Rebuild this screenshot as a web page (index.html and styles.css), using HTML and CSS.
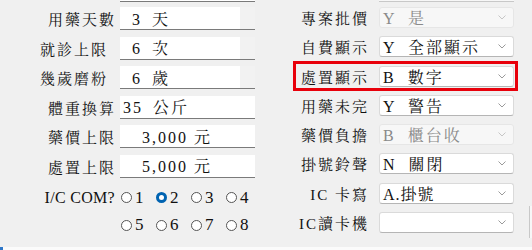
FILE: index.html
```html
<!DOCTYPE html>
<html lang="zh-Hant">
<head>
<meta charset="utf-8">
<link rel="stylesheet" href="styles.css">
</head>
<body>
<div class="panel">
  <div class="col left">
    <div class="stub-input"></div>
    <div class="row">
      <div class="label">用藥天數</div>
      <div class="input"><span class="val p12">3 天</span><span class="spin"></span></div>
    </div>
    <div class="row">
      <div class="label narrow">就診上限</div>
      <div class="input"><span class="val p12">6 次</span><span class="spin"></span></div>
    </div>
    <div class="row">
      <div class="label narrow">幾歲磨粉</div>
      <div class="input"><span class="val p12">6 歲</span><span class="spin"></span></div>
    </div>
    <div class="row">
      <div class="label">體重換算</div>
      <div class="input"><span class="val p3">35 公斤</span></div>
    </div>
    <div class="row">
      <div class="label">藥價上限</div>
      <div class="input"><span class="val p22 money">3,000 元</span></div>
    </div>
    <div class="row">
      <div class="label">處置上限</div>
      <div class="input"><span class="val p22 money">5,000 元</span></div>
    </div>
    <div class="row radio-row">
      <div class="label latin">I/C COM?</div>
      <div class="radios">
        <span class="radio"><span class="dot"></span>1</span>
        <span class="radio"><span class="dot on"></span>2</span>
        <span class="radio"><span class="dot"></span>3</span>
        <span class="radio"><span class="dot"></span>4</span>
      </div>
    </div>
    <div class="row radio-row">
      <div class="label"></div>
      <div class="radios">
        <span class="radio"><span class="dot"></span>5</span>
        <span class="radio"><span class="dot"></span>6</span>
        <span class="radio"><span class="dot"></span>7</span>
        <span class="radio"><span class="dot"></span>8</span>
      </div>
    </div>
  </div>
  <div class="col right">
    <div class="stub-select"></div>
    <div class="srow">
      <div class="slabel">專案批價</div>
      <div class="select disabled"><span class="sval">Y 是</span><svg class="chev" width="8" height="5" viewBox="0 0 8 5"><path d="M0.5 0.5 L4 4 L7.5 0.5" fill="none" stroke="currentColor" stroke-width="1"/></svg></div>
    </div>
    <div class="srow">
      <div class="slabel">自費顯示</div>
      <div class="select"><span class="sval">Y 全部顯示</span><svg class="chev" width="8" height="5" viewBox="0 0 8 5"><path d="M0.5 0.5 L4 4 L7.5 0.5" fill="none" stroke="currentColor" stroke-width="1"/></svg></div>
    </div>
    <div class="srow marked">
      <div class="slabel">處置顯示</div>
      <div class="select"><span class="sval">B 數字</span><svg class="chev" width="8" height="5" viewBox="0 0 8 5"><path d="M0.5 0.5 L4 4 L7.5 0.5" fill="none" stroke="currentColor" stroke-width="1"/></svg></div>
    </div>
    <div class="srow">
      <div class="slabel">用藥未完</div>
      <div class="select"><span class="sval">Y 警告</span><svg class="chev" width="8" height="5" viewBox="0 0 8 5"><path d="M0.5 0.5 L4 4 L7.5 0.5" fill="none" stroke="currentColor" stroke-width="1"/></svg></div>
    </div>
    <div class="srow">
      <div class="slabel">藥價負擔</div>
      <div class="select disabled"><span class="sval">B 櫃台收</span><svg class="chev" width="8" height="5" viewBox="0 0 8 5"><path d="M0.5 0.5 L4 4 L7.5 0.5" fill="none" stroke="currentColor" stroke-width="1"/></svg></div>
    </div>
    <div class="srow">
      <div class="slabel">掛號鈴聲</div>
      <div class="select"><span class="sval">N 關閉</span><svg class="chev" width="8" height="5" viewBox="0 0 8 5"><path d="M0.5 0.5 L4 4 L7.5 0.5" fill="none" stroke="currentColor" stroke-width="1"/></svg></div>
    </div>
    <div class="srow">
      <div class="slabel latin-mix">IC 卡寫</div>
      <div class="select"><span class="sval tight">A.掛號</span><svg class="chev" width="8" height="5" viewBox="0 0 8 5"><path d="M0.5 0.5 L4 4 L7.5 0.5" fill="none" stroke="currentColor" stroke-width="1"/></svg></div>
    </div>
    <div class="srow">
      <div class="slabel">IC讀卡機</div>
      <div class="select"><span class="sval"></span><svg class="chev" width="8" height="5" viewBox="0 0 8 5"><path d="M0.5 0.5 L4 4 L7.5 0.5" fill="none" stroke="currentColor" stroke-width="1"/></svg></div>
      <div class="edge"></div>
    </div>
  </div>
</div>
<div class="footer-line"></div>
</body>
</html>
```

FILE: styles.css
```css
html, body {
  margin: 0;
  padding: 0;
}
body {
  width: 532px;
  height: 250px;
  overflow: hidden;
  background: #f0f0f0;
  font-family: "Liberation Serif", "Noto Serif CJK TC", "Noto Sans CJK TC", serif;
  color: #111;
}
.panel {
  display: grid;
  grid-template-columns: 266px 266px;
  height: 247px;
}
.col {
  display: flex;
  flex-direction: column;
}

/* left column */
.stub-input {
  margin-left: 120px;
  width: 135px;
  height: 1px;
  background: #fff;
  border-bottom: 1px solid #7a7a7a;
}
.left .row {
  display: flex;
  align-items: center;
  height: 23px;
  margin-top: 6.5px;
}
.stub-input + .row {
  margin-top: 5px;
}
.label {
  width: 116px;
  flex: none;
  box-sizing: border-box;
  text-align: right;
  font-size: 15px;
  letter-spacing: 2px;
  white-space: nowrap;
}
.label.narrow {
  padding-right: 8px;
}
.label.latin {
  font-size: 16px;
  letter-spacing: 0.3px;
  padding-right: 1px;
}
.input {
  margin-left: 4px;
  width: 135px;
  height: 23px;
  box-sizing: border-box;
  background: #fff;
  border-bottom: 1px solid #7a7a7a;
  display: flex;
  align-items: center;
}
.val {
  flex: 1;
  font-size: 16px;
  letter-spacing: 2px;
  word-spacing: 4px;
  white-space: pre;
}
.val.p12 { padding-left: 12px; }
.val.p3 { padding-left: 3px; }
.val.p22 { padding-left: 22px; }
.val.money { word-spacing: 0; }
.spin {
  width: 15px;
  align-self: stretch;
  background: #f2f2f2;
}
.radio-row {
  height: 24px;
}
.left .row.radio-row {
  margin-top: 8.5px;
}
.left .row.radio-row + .row.radio-row {
  margin-top: 4.5px;
}
.radios {
  display: flex;
  margin-left: 5px;
}
.radio {
  width: 35px;
  display: flex;
  align-items: center;
  font-size: 17px;
}
.dot {
  width: 11px;
  height: 11px;
  box-sizing: border-box;
  border: 1px solid #555;
  border-radius: 50%;
  margin-right: 3px;
  background: #fff;
}
.dot.on {
  border: 3.5px solid #0063b1;
  background: #fff;
}

/* right column */
.stub-select {
  margin-left: 113px;
  width: 135px;
  height: 1px;
  border-bottom: 1px solid #c8c8c8;
  background: #f7f7f7;
}
.srow {
  position: relative;
  display: flex;
  align-items: center;
  height: 21px;
  margin-top: 8.3px;
}
.stub-select + .srow {
  margin-top: 5px;
}
.slabel {
  width: 103px;
  flex: none;
  text-align: right;
  font-size: 15px;
  letter-spacing: 2px;
  white-space: nowrap;
}
.select {
  margin-left: 10px;
  width: 135px;
  height: 21px;
  box-sizing: border-box;
  background: #fff;
  border: 1px solid #dadada;
  border-bottom-color: #b5b5b5;
  border-radius: 3px;
  display: flex;
  align-items: center;
  color: #111;
}
.select.disabled {
  background: #f7f7f7;
  border-color: #e6e6e6;
  color: #8a8a8a;
}
.sval {
  flex: 1;
  padding-left: 3px;
  font-size: 16px;
  letter-spacing: 2px;
  word-spacing: 6px;
  white-space: pre;
}
.sval.tight {
  letter-spacing: 1px;
}
.chev {
  margin-right: 7px;
  color: #9a9a9a;
}
.select.disabled .chev {
  color: #c6c6c6;
}
.marked::after {
  content: "";
  position: absolute;
  top: -5px;
  bottom: -4px;
  left: 27px;
  right: 14px;
  border: 3px solid #e8000b;
  pointer-events: none;
}
.edge {
  margin-left: auto;
  width: 2px;
  align-self: stretch;
  border-left: 1px solid #c8c8c8;
  background: #f7f7f7;
  margin-top: -6px;
  height: 32px;
}
.footer-line {
  height: 3px;
  background: #fbfbfb;
  border-left: 3px solid #2f77c8;
}
```
